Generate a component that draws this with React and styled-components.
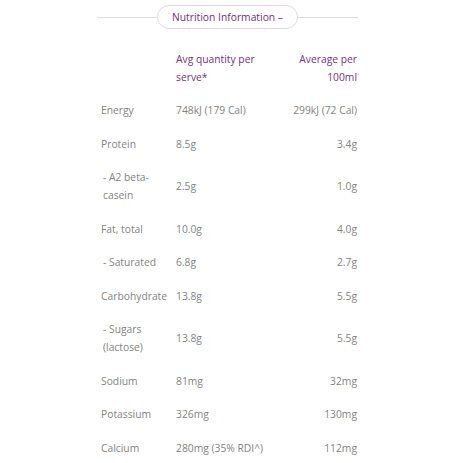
import React from "react";
import styled, { createGlobalStyle } from "styled-components";

const GlobalStyle = createGlobalStyle`
  body {
    margin: 0;
    background: #ffffff;
    font-family: "Open Sans", "Noto Sans", sans-serif;
  }
`;

const rows = [
  { name: "Energy", serve: "748kJ (179 Cal)", per100: "299kJ (72 Cal)" },
  { name: "Protein", serve: "8.5g", per100: "3.4g" },
  { name: "- A2 beta-casein", serve: "2.5g", per100: "1.0g", sub: true },
  { name: "Fat, total", serve: "10.0g", per100: "4.0g" },
  { name: "- Saturated", serve: "6.8g", per100: "2.7g", sub: true },
  { name: "Carbohydrate", serve: "13.8g", per100: "5.5g" },
  { name: "- Sugars (lactose)", serve: "13.8g", per100: "5.5g", sub: true },
  { name: "Sodium", serve: "81mg", per100: "32mg" },
  { name: "Potassium", serve: "326mg", per100: "130mg" },
  { name: "Calcium", serve: "280mg (35% RDI^)", per100: "112mg" },
];

const App = () => {
  return (
    <>
      <GlobalStyle />
      <Panel>
        <Heading>
          <Rule />
          <Pill>Nutrition Information –</Pill>
          <Rule />
        </Heading>

        <Table>
          <Row>
            <Cell />
            <HeadCell>Avg quantity per serve*</HeadCell>
            <HeadCell right>Average per 100ml</HeadCell>
          </Row>
          {rows.map((r) => (
            <Row key={r.name}>
              <Label sub={r.sub}>{r.name}</Label>
              <Cell>{r.serve}</Cell>
              <Cell right>{r.per100}</Cell>
            </Row>
          ))}
        </Table>
      </Panel>
    </>
  );
};

export default App;

const Panel = styled.div`
  width: 261px;
  margin-left: 97px;
  padding-top: 5px;
`;

const Heading = styled.div`
  display: flex;
  align-items: center;
`;

const Rule = styled.div`
  flex: 1;
  height: 1px;
  background: #dcdcdc;
`;

const Pill = styled.div`
  height: 22px;
  display: flex;
  align-items: center;
  padding: 0 14px;
  border: 1px solid #e4d5e8;
  border-radius: 12px;
  color: #6f2f7c;
  font-size: 10.3px;
  white-space: nowrap;
`;

const Table = styled.div`
  margin-top: 14px;
`;

const Row = styled.div`
  display: grid;
  grid-template-columns: 79px 1fr 70px;
  align-items: center;
  padding: 8px 0;
`;

const Cell = styled.div`
  font-size: 10.3px;
  line-height: 17.6px;
  color: #828282;
  text-align: ${(p) => (p.right ? "right" : "left")};
  padding-right: ${(p) => (p.right ? "1px" : "0")};
`;

const Label = styled(Cell)`
  padding-left: ${(p) => (p.sub ? "6px" : "4px")};
  padding-right: 6px;
`;

const HeadCell = styled(Cell)`
  color: #74327f;
`;
